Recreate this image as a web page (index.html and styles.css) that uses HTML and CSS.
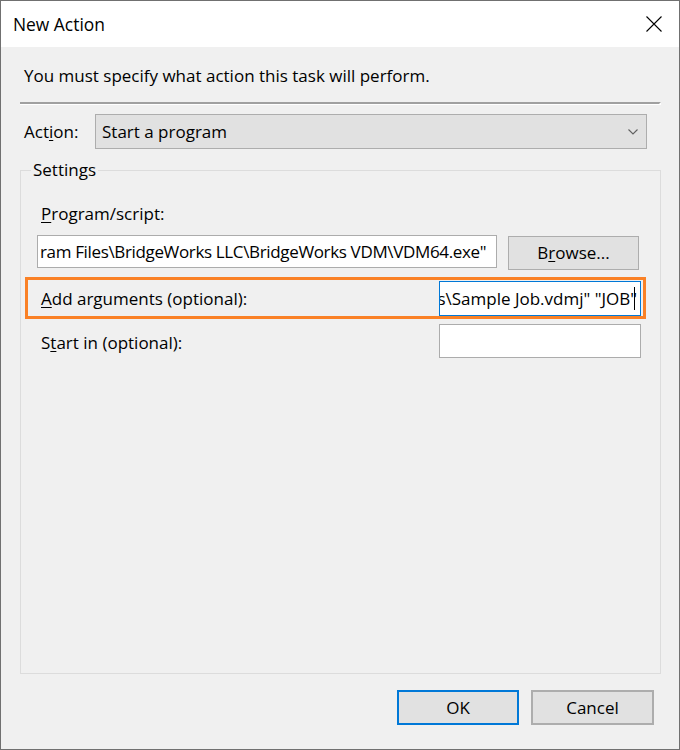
FILE: index.html
```html
<!DOCTYPE html>
<html>
<head>
<meta charset="utf-8">
<title>New Action</title>
<link rel="stylesheet" href="styles.css">
</head>
<body>
<div class="window">
  <div class="titlebar">
    <span class="title">New Action</span>
    <svg class="close" width="16" height="16" viewBox="0 0 16 16"><path d="M0.5 0.5 L15.5 15.5 M15.5 0.5 L0.5 15.5" stroke="#000" stroke-width="1.1" fill="none"/></svg>
  </div>
  <div class="content">
    <div class="instruction">You must specify what action this task will perform.</div>
    <div class="separator"></div>
    <div class="action-row">
      <span class="action-label">Act<u>i</u>on:</span>
      <div class="combo">
        <span>Start a program</span>
        <svg class="chevron" width="10" height="6" viewBox="0 0 10 6"><path d="M0.5 0.5 L5 5 L9.5 0.5" stroke="#606060" stroke-width="1.1" fill="none"/></svg>
      </div>
    </div>
    <fieldset class="settings">
      <legend>Settings</legend>
      <div class="field-label program-label"><u>P</u>rogram/script:</div>
      <div class="program-row">
        <div class="textbox program-box"><span class="value">ram Files\BridgeWorks LLC\BridgeWorks VDM\VDM64.exe"</span></div>
        <div class="btn browse">B<u>r</u>owse...</div>
      </div>
      <div class="field-row args-row">
        <span class="field-label"><u>A</u>dd arguments (optional):</span>
        <div class="textbox small focused"><span class="value">s\Sample Job.vdmj" "JOB"</span><span class="caret"></span></div>
      </div>
      <div class="field-row start-row">
        <span class="field-label start-label">S<u>t</u>art in (optional):</span>
        <div class="textbox small"></div>
      </div>
    </fieldset>
    <div class="footer">
      <div class="btn dialog-btn ok">OK</div>
      <div class="btn dialog-btn cancel">Cancel</div>
    </div>
  </div>
</div>
</body>
</html>
```
FILE: styles.css
```css
* { box-sizing: border-box; }
html, body { margin: 0; padding: 0; }
body {
  font-family: "Open Sans", "Noto Sans", "Liberation Sans", sans-serif;
  font-size: 17px;
  line-height: 22px;
  color: #000;
  background: #f0f0f0;
}
u { text-decoration-thickness: 1px; text-underline-offset: 2px; }
.window {
  width: 680px;
  height: 750px;
  border: 1px solid #707070;
  display: flex;
  flex-direction: column;
  background: #f0f0f0;
}
.titlebar {
  height: 46px;
  flex: none;
  background: #fff;
  display: flex;
  align-items: center;
  justify-content: space-between;
  padding: 0 17px 0 12px;
}
.title { font-size: 17.4px; }
.close { display: block; }
.content {
  flex: 1;
  display: flex;
  flex-direction: column;
  padding: 0 18px 0 19px;
}
.instruction {
  margin-top: 18px;
  padding-left: 4px;
}
.separator {
  margin-top: 15px;
  height: 3px;
  border-top: 2px solid #a0a0a0;
  border-bottom: 1px solid #fff;
  border-right: 2px solid #fff;
  width: 641px;
}
.action-row {
  margin-top: 9px;
  display: flex;
  align-items: center;
}
.action-label {
  width: 75px;
  padding-left: 4px;
}
.combo {
  width: 552px;
  height: 35px;
  background: #e1e1e1;
  border: 1px solid #adadad;
  display: flex;
  align-items: center;
  justify-content: space-between;
  padding: 0 8px 0 6px;
}
.chevron { display: block; margin-top: 1px; }
.settings {
  margin: 10px 0 0 0;
  flex: 1;
  border: 1px solid #dcdcdc;
  padding: 0 19px 0 16px;
  min-width: 0;
}
.settings legend {
  padding: 0 2px;
  margin-left: -6px;
  line-height: 22px;
}
.field-label { padding-left: 4px; white-space: nowrap; }
.program-label { margin-top: 22px; }
.program-row {
  margin-top: 10px;
  display: flex;
  align-items: flex-start;
  height: 35px;
}
.textbox {
  background: #fff;
  border: 1px solid #acacac;
  display: flex;
  align-items: center;
  justify-content: flex-end;
  overflow: hidden;
  white-space: nowrap;
}
.program-box {
  width: 460px;
  height: 33px;
  justify-content: flex-start;
  padding-left: 2px;
  letter-spacing: -0.35px;
}
.btn {
  background: #e1e1e1;
  border: 1px solid #adadad;
  display: flex;
  align-items: center;
  justify-content: center;
}
.browse {
  width: 131px;
  height: 34px;
  margin-left: 11px;
  margin-top: 1px;
}
.field-row {
  display: flex;
  align-items: center;
  justify-content: space-between;
  position: relative;
}
.args-row { margin-top: 11px; height: 35px; }
.args-row::after {
  content: "";
  position: absolute;
  top: -4px;
  bottom: -3px;
  left: -12px;
  right: -5px;
  border: 3px solid #fa8126;
  pointer-events: none;
}
.start-row { margin-top: 8px; height: 34px; }
.start-label { padding-top: 4px; }
.textbox.small { width: 202px; height: 100%; }
.focused { border-color: #0078d7; padding-right: 5px; }
.caret {
  flex: none;
  width: 1px;
  height: 23px;
  background: #000;
  margin-left: -3px;
}
.footer {
  display: flex;
  justify-content: flex-end;
  gap: 12px;
  padding: 16px 7px 24px 0;
}
.dialog-btn { height: 35px; }
.ok { width: 122px; border: 2px solid #0078d7; }
.cancel { width: 123px; border: 2px solid #adadad; }
```
